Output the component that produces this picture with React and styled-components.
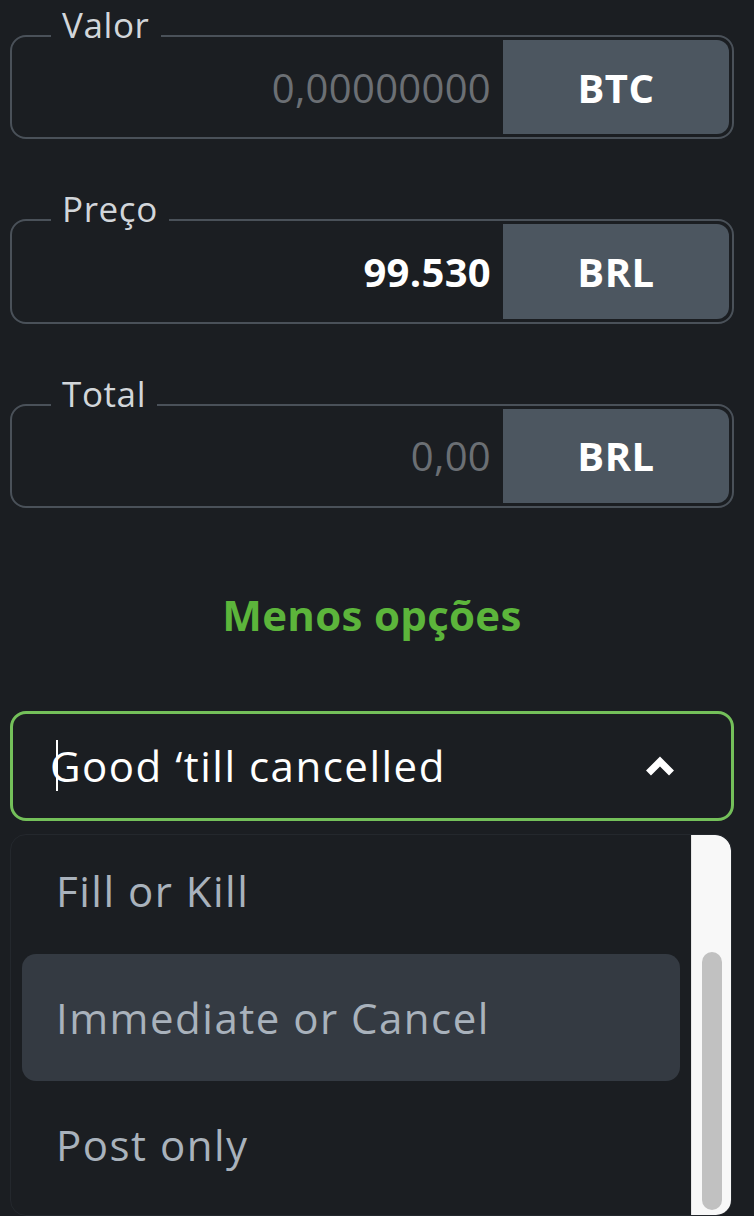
import React from 'react'
import styled, { createGlobalStyle } from 'styled-components'

const GlobalStyle = createGlobalStyle`
  html, body {
    margin: 0;
    background: #1b1e22;
    overflow: hidden;
  }
  body {
    font-family: "Open Sans", "Noto Sans", sans-serif;
  }
`

const Page = styled.div`
  height: 1216px;
  padding: 35px 20px 0 10px;
  box-sizing: border-box;
  display: flex;
  flex-direction: column;
`

const FieldBox = styled.div`
  position: relative;
  height: 105px;
  box-sizing: border-box;
  border: 2px solid #4a5159;
  border-radius: 16px;
  padding: 3px;
  display: flex;
  margin-bottom: ${(p) => (p.$last ? '0' : '80px')};
`

const Label = styled.span`
  position: absolute;
  top: -30px;
  left: 39px;
  padding: 0 11px;
  background: #1b1e22;
  color: #d2d6da;
  font-size: 35px;
  line-height: 35px;
  letter-spacing: 0.6px;
`

const Amount = styled.div`
  flex: 1;
  display: flex;
  align-items: center;
  justify-content: flex-end;
  padding-right: 12px;
  font-size: 40px;
  letter-spacing: 0.3px;
  color: ${(p) => (p.$filled ? '#ffffff' : '#6b6f74')};
  font-weight: ${(p) => (p.$filled ? 700 : 400)};
`

const Currency = styled.div`
  width: 226px;
  display: flex;
  align-items: center;
  justify-content: center;
  background: #4c5660;
  border-radius: 0 12px 12px 0;
  color: #ffffff;
  font-size: 40px;
  font-weight: 700;
  letter-spacing: 0.5px;
`

const Toggle = styled.div`
  margin-top: 82px;
  height: 50px;
  line-height: 50px;
  text-align: center;
  color: #5cb53b;
  font-size: 42px;
  font-weight: 700;
  letter-spacing: 0.3px;
`

const Select = styled.div`
  position: relative;
  margin-top: 71px;
  height: 110px;
  box-sizing: border-box;
  border: 3px solid #74c05a;
  border-radius: 16px;
  display: flex;
  align-items: center;
  padding: 0 56px 0 37px;
`

const SelectText = styled.span`
  flex: 1;
  color: #ffffff;
  font-size: 42px;
  letter-spacing: 1.5px;
`

const Cursor = styled.span`
  position: absolute;
  left: 43px;
  top: 26px;
  width: 2px;
  height: 51px;
  background: #ffffff;
`

const Menu = styled.div`
  margin-top: 13px;
  margin-right: 2px;
  height: 383px;
  border: 1px solid #24282d;
  border-radius: 16px;
  background: #1b1e22;
  overflow: hidden;
  display: flex;
`

const List = styled.div`
  flex: 1;
  padding: 0 11px 0 11px;
  margin-top: -8px;
`

const Option = styled.div`
  height: 127px;
  display: flex;
  align-items: center;
  padding-left: 34px;
  border-radius: 14px;
  background: ${(p) => (p.$active ? '#343a42' : 'transparent')};
  color: #a9b2bc;
  font-size: 42px;
  letter-spacing: 1.5px;
`

const Track = styled.div`
  width: 40px;
  background: #f8f8f8;
  border-left: 1px solid #e6e6e6;
  border-top-right-radius: 16px;
  padding: 117px 9px 0 10px;
  box-sizing: border-box;
`

const Thumb = styled.div`
  height: 258px;
  border-radius: 10px;
  background: #c1c1c1;
`

const ChevronUp = () => (
  <svg width="30" height="22" viewBox="0 0 30 22">
    <polyline
      points="3.5,18 15,6.5 26.5,18"
      fill="none"
      stroke="#ffffff"
      strokeWidth="7"
      strokeLinejoin="miter"
    />
  </svg>
)

const fields = [
  { label: 'Valor', value: '0,00000000', unit: 'BTC' },
  { label: 'Preço', value: '99.530', unit: 'BRL', filled: true },
  { label: 'Total', value: '0,00', unit: 'BRL' },
]

const options = [
  { name: 'Fill or Kill' },
  { name: 'Immediate or Cancel', active: true },
  { name: 'Post only' },
]

const App = () => {
  return (
    <>
      <GlobalStyle />
      <Page>
        {fields.map((f, i) => (
          <FieldBox key={f.label} $last={i === fields.length - 1}>
            <Label>{f.label}</Label>
            <Amount $filled={f.filled}>{f.value}</Amount>
            <Currency>{f.unit}</Currency>
          </FieldBox>
        ))}
        <Toggle>Menos opções</Toggle>
        <Select>
          <Cursor />
          <SelectText>Good ‘till cancelled</SelectText>
          <ChevronUp />
        </Select>
        <Menu>
          <List>
            {options.map((o) => (
              <Option key={o.name} $active={o.active}>
                {o.name}
              </Option>
            ))}
          </List>
          <Track>
            <Thumb />
          </Track>
        </Menu>
      </Page>
    </>
  )
}

export default App
